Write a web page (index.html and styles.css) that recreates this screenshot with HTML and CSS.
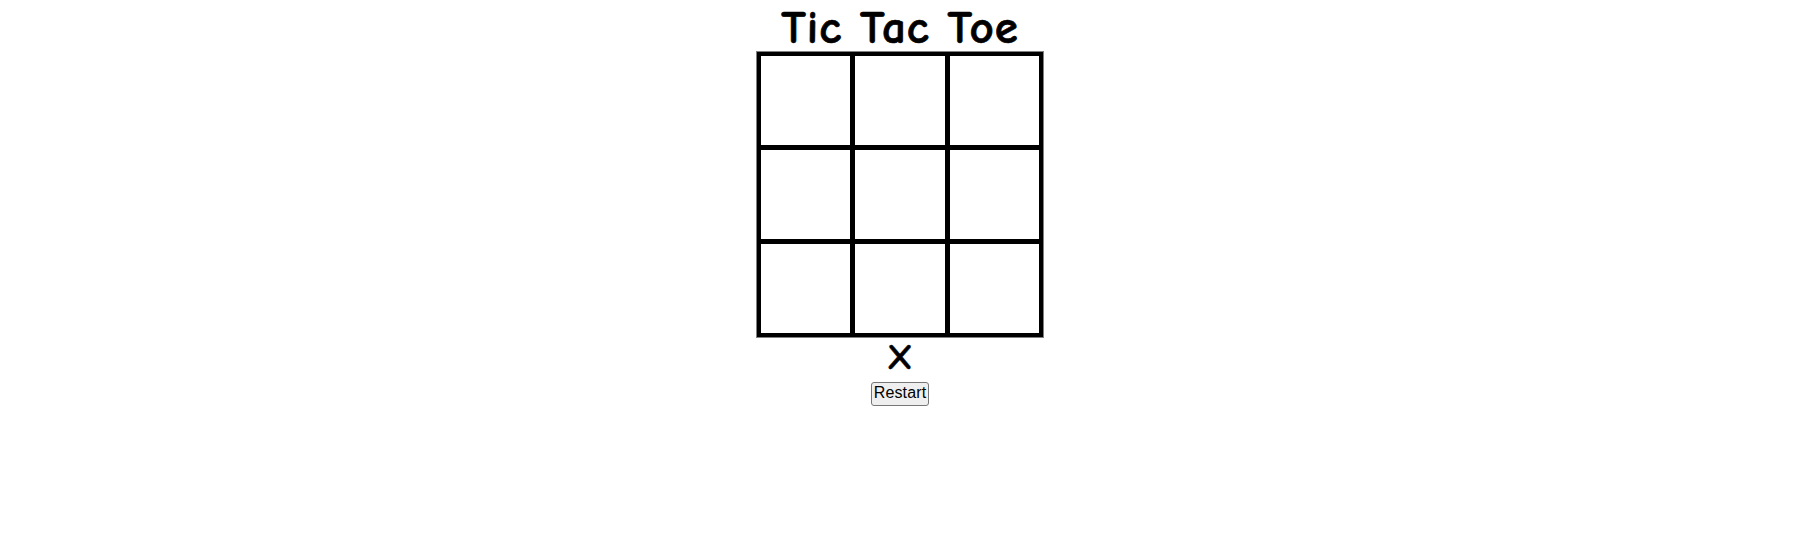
FILE: index.html
```html
<!DOCTYPE html>
<html lang="en">
<head>
<meta charset="utf-8">
<title>Tic Tac Toe</title>
<link rel="stylesheet" href="styles.css">
</head>
<body>
<main class="game">
  <h1 class="title">Tic Tac Toe</h1>
  <div class="board">
    <div class="cell"></div><div class="cell"></div><div class="cell"></div>
    <div class="cell"></div><div class="cell"></div><div class="cell"></div>
    <div class="cell"></div><div class="cell"></div><div class="cell"></div>
  </div>
  <div class="status">X</div>
  <button class="restart" type="button">Restart</button>
</main>
</body>
</html>
```

FILE: styles.css
```css
html, body { margin: 0; padding: 0; background: #fff; }
body { height: 551px; overflow: hidden; }
.game {
  display: flex;
  flex-direction: column;
  align-items: center;
  padding-left: 6px;
  color: #000;
  font-family: "Comic Sans MS", "Comic Neue", cursive;
}
.title {
  margin: 0;
  height: 51px;
  line-height: 56px;
  font-size: 47px;
  font-weight: 700;
  letter-spacing: 1px;
  white-space: nowrap;
  -webkit-text-stroke: 0.7px #000;
}
.board {
  display: grid;
  grid-template-columns: 89px 90px 89px;
  grid-template-rows: repeat(3, 89px);
  gap: 5px;
  padding: 4px;
  background: #000;
  border: 1px solid #808080;
}
.cell { background: #fff; }
.status {
  height: 44px;
  line-height: 38px;
  font-size: 37px;
  font-weight: 700;
  -webkit-text-stroke: 0.5px #000;
}
.restart {
  width: 58px;
  height: 24px;
  padding: 0 0 2px;
  font-family: "Liberation Sans", Arial, sans-serif;
  font-size: 16px;
  letter-spacing: 0.15px;
  color: #000;
  background: #efefef;
  border: 1px solid #767676;
  border-radius: 3px;
}
```
